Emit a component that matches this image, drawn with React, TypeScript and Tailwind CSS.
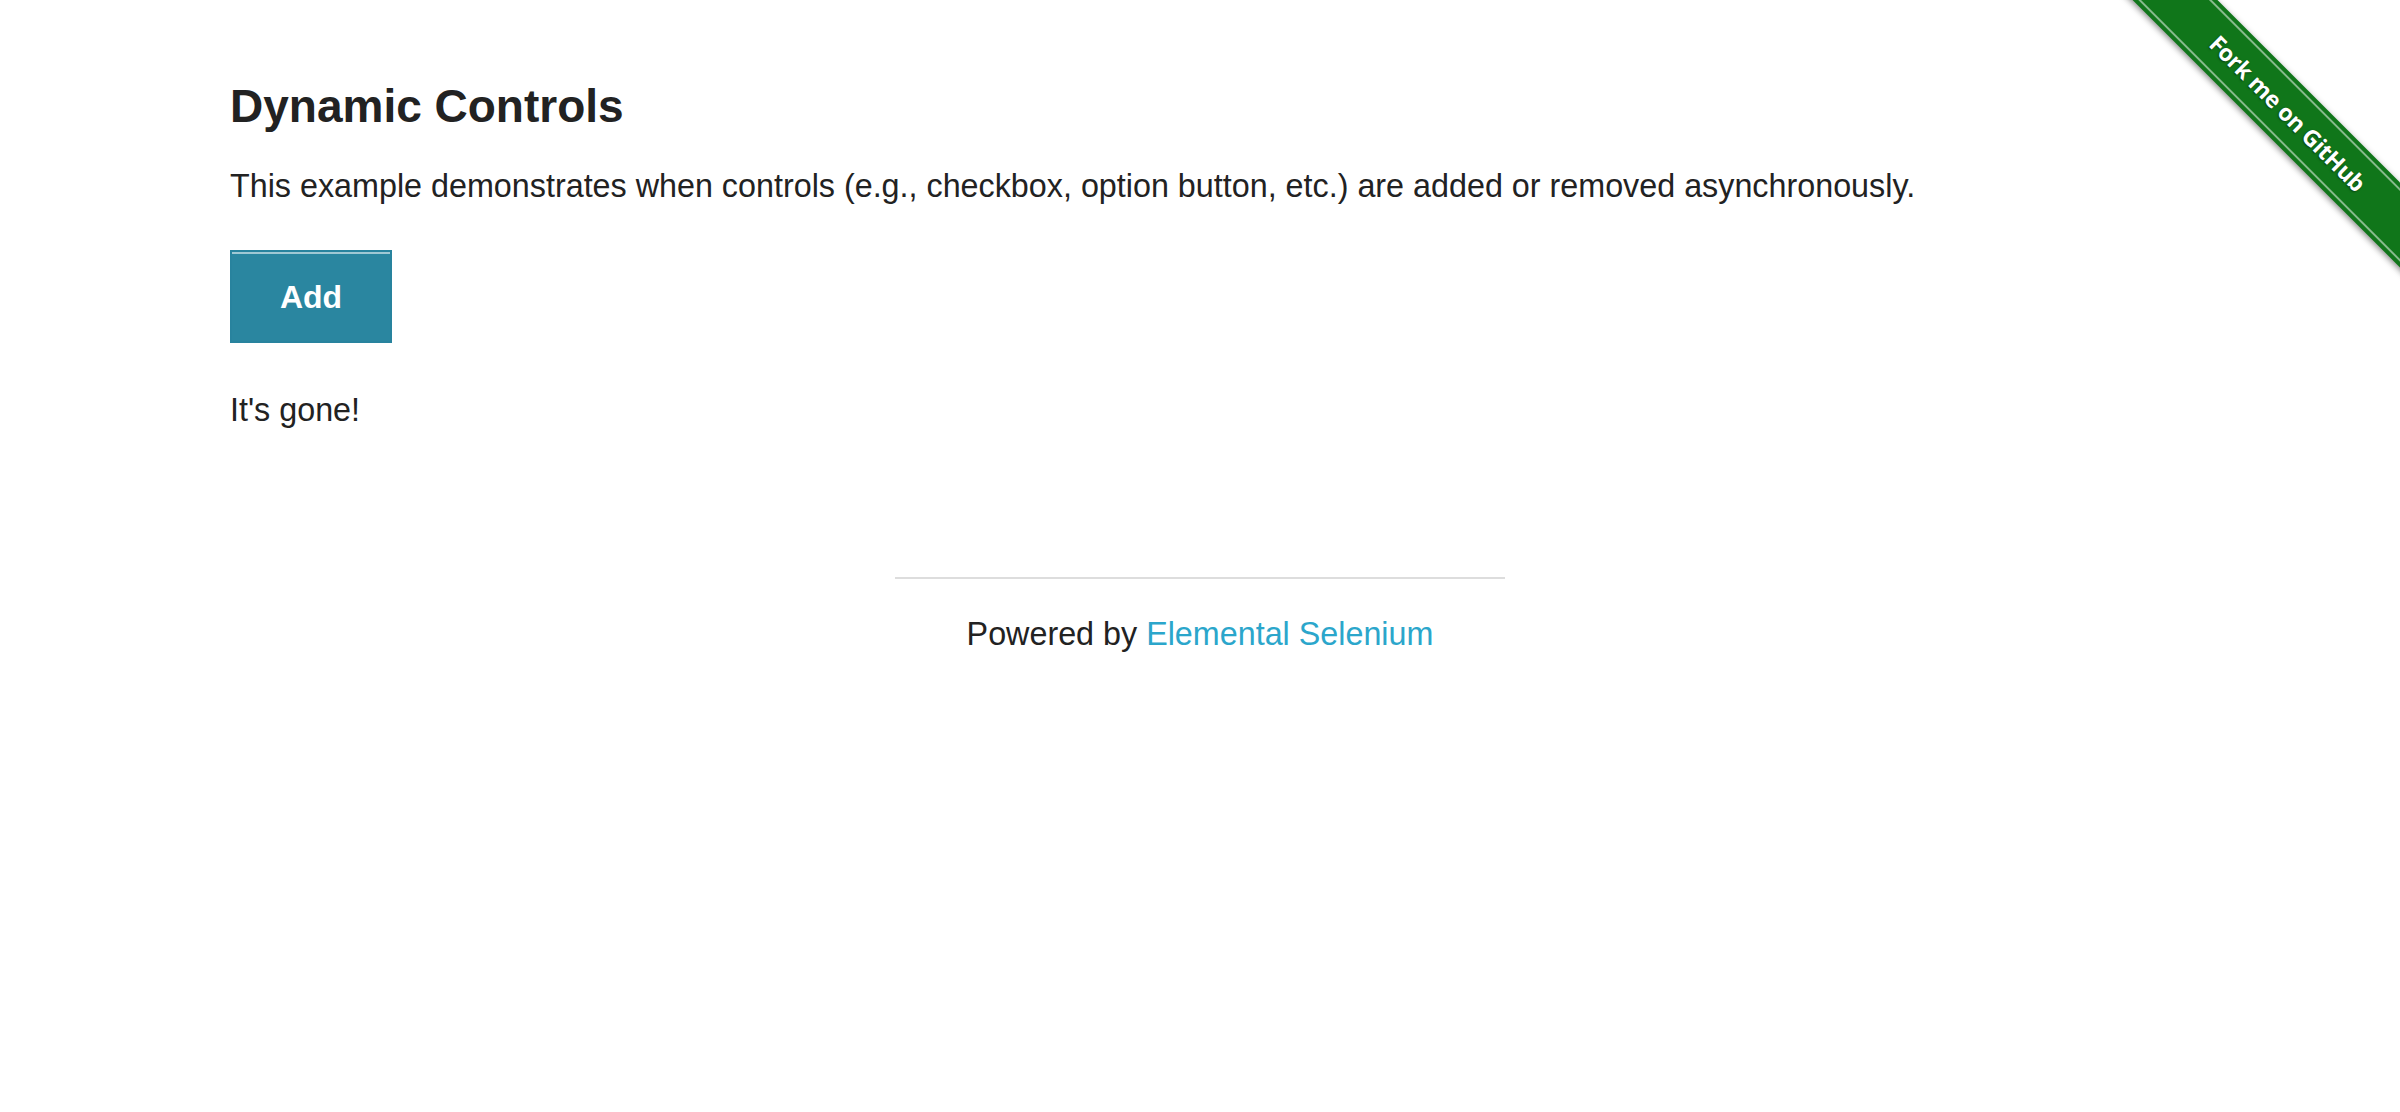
import React from 'react';

const ForkRibbon: React.FC = () => (
    <div className="absolute top-0 right-0 w-[298px] h-[298px] overflow-hidden pointer-events-none">
        <a
            href="#"
            className="absolute left-[-24px] top-[83px] w-[420px] h-[60px] rotate-45 bg-[#10761a] shadow-[0_2px_6px_rgba(0,0,0,0.45)] flex items-center justify-center pointer-events-auto"
        >
            <span className="absolute inset-x-0 top-[4px] h-0 border-t-2 border-white/50" />
            <span className="absolute inset-x-0 bottom-[4px] h-0 border-t-2 border-white/50" />
            <span className="text-white text-[23px] font-bold leading-none tracking-[-0.4px] [font-family:'Open_Sans',sans-serif] [text-shadow:0_1px_2px_rgba(0,0,0,0.5)]">
                Fork me on GitHub
            </span>
        </a>
    </div>
);

const App: React.FC = () => {
    return (
        <div className="relative min-h-[1112px] w-full bg-white text-[#222222] [font-family:'Liberation_Sans',Arial,sans-serif]">
            <ForkRibbon />

            <div className="pl-[230px] pt-[79px]">
                <h3 className="text-[46px] leading-[55px] font-bold">Dynamic Controls</h3>
                <p className="mt-[32px] text-[32.3px] leading-[40px]">
                    This example demonstrates when controls (e.g., checkbox, option button, etc.) are added or removed asynchronously.
                </p>

                <button
                    type="button"
                    className="mt-[44px] flex h-[93px] w-[162px] items-center justify-center border-2 border-[#28839e] bg-[#2a86a0] text-white text-[32px] font-bold leading-none shadow-[inset_0_2px_0_rgba(255,255,255,0.55)]"
                >
                    Add
                </button>

                <p className="mt-[47px] text-[32.3px] leading-[40px]">It's gone!</p>
            </div>

            <div className="flex flex-col items-center mt-[147px]">
                <hr className="w-[610px] border-0 border-t-2 border-[#dddddd]" />
                <div className="mt-[35px] text-[32.3px] leading-[40px]">
                    Powered by{' '}
                    <a href="#" className="text-[#2ba6cb]">
                        Elemental Selenium
                    </a>
                </div>
            </div>
        </div>
    );
};

export default App;
